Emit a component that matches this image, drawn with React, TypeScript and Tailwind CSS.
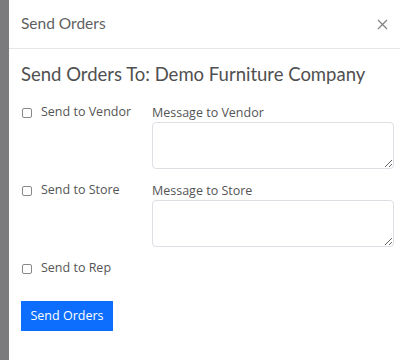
export default function App() {
  return (
    <div className="flex h-[360px] w-[400px] bg-white" style={{ fontFamily: '"Open Sans", sans-serif' }}>
      <div className="w-[9px] shrink-0 bg-[#7b7b7d]" />
      <div className="flex-1">
        <div className="flex h-[49px] items-center justify-between border-b border-[#e4e6ea] pl-[12px] pr-[18px]">
          <h1 className="text-[15.5px] text-[#5f5f5f]" style={{ fontFamily: 'Lato, sans-serif' }}>Send Orders</h1>
          <button className="text-[#808080]">
            <svg width="11" height="11" viewBox="0 0 11 11" stroke="currentColor" strokeWidth="1.2">
              <path d="M1 1l9 9M10 1l-9 9" />
            </svg>
          </button>
        </div>
        <div className="px-[12px] pt-[13px]">
          <h2 className="text-[18.5px] leading-[24px] text-[#505050]" style={{ fontFamily: 'Lato, sans-serif' }}>
            Send Orders To: Demo Furniture Company
          </h2>
          <div className="mt-[17px] flex flex-col gap-[12px] text-[12.5px] text-[#555]">
            <Row label="Send to Vendor" message="Message to Vendor" />
            <Row label="Send to Store" message="Message to Store" />
            <Row label="Send to Rep" />
          </div>
          <button className="mt-[23px] h-[30px] w-[92px] bg-[#0d6efd] text-[12.5px] text-white">Send Orders</button>
        </div>
      </div>
    </div>
  );
}

function Row({ label, message }: { label: string; message?: string }) {
  return (
    <div className="flex">
      <label className="flex h-[19px] w-[131px] items-center gap-[9px] self-start pl-[1px]">
        <input type="checkbox" className="h-[10px] w-[10px] appearance-none rounded-[2px] border border-[#888]" />
        <span>{label}</span>
      </label>
      {message && (
        <div className="flex flex-1 flex-col">
          <span className="h-[19px] leading-[19px]">{message}</span>
          <textarea className="h-[47px] w-[242px] rounded-[4px] border border-[#dcdfe4]" />
        </div>
      )}
    </div>
  );
}
